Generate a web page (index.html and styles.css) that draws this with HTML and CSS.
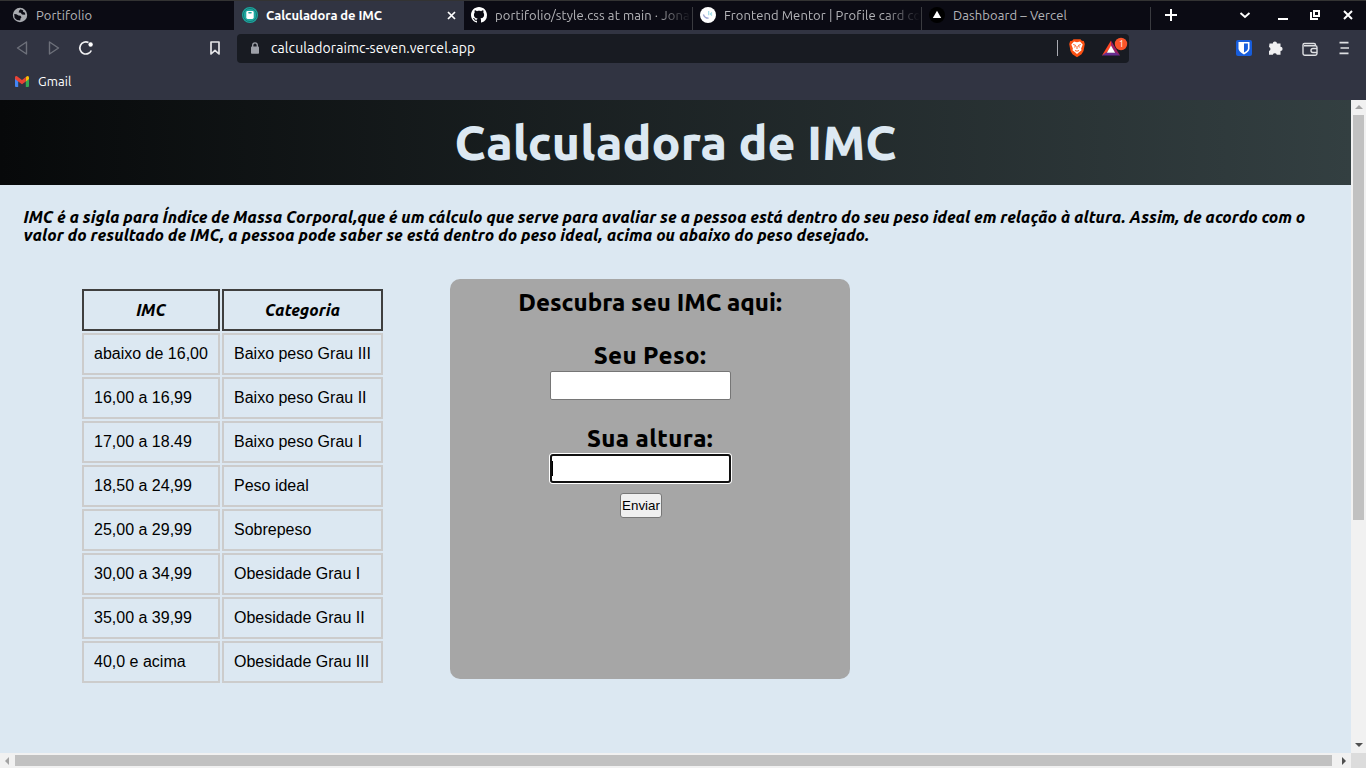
FILE: index.html
```html
<!DOCTYPE html>
<html lang="pt-BR">
<head>
<meta charset="utf-8">
<title>Calculadora de IMC</title>
<link rel="stylesheet" href="styles.css">
</head>
<body>
<div class="browser">
  <div class="tabs">
    <div class="tab tab-first">
      <svg class="favicon" width="16" height="16" viewBox="0 0 16 16"><circle cx="8" cy="8" r="7.2" fill="#a9abb0"/><path d="M2.200 7 4.500 7.300 6.500 8.500l2 .3 1 1.500-1 1.200-.3 2L5 13 2.600 11zM8.500 2.200 7 3.800l-.3 1.700 2 .3 1.300 1.700 3.200.3-.2-2-2-1 .3-1.300z" fill="#0c0c15"/></svg>
      <span class="label">Portifolio</span>
    </div>
    <div class="tab tab-active">
      <svg class="favicon" width="16" height="16" viewBox="0 0 16 16"><circle cx="8" cy="8" r="8" fill="#1da79f"/><circle cx="8" cy="8" r="6.600" fill="none" stroke="#14706f" stroke-width=".8"/><rect x="4.300" y="4" width="7.400" height="8" rx="1.400" fill="#fff"/><rect x="6.200" y="5" width="3.600" height="1.400" rx=".7" fill="#1da79f"/></svg>
      <span class="label">Calculadora de IMC</span>
      <svg class="close" width="9" height="9" viewBox="0 0 9 9"><path d="m1 1 7 7M8 1 1 8" stroke="#fff" stroke-width="1.700"/></svg>
    </div>
    <div class="tab tab-page">
      <svg class="favicon" width="16" height="16" viewBox="0 0 16 16"><path fill="#fff" d="M8 0C3.58 0 0 3.58 0 8c0 3.54 2.29 6.53 5.47 7.59.4.07.55-.17.55-.38 0-.19-.01-.82-.01-1.49-2.01.37-2.53-.49-2.69-.94-.09-.23-.48-.94-.82-1.13-.28-.15-.68-.52-.01-.53.63-.01 1.08.58 1.23.82.72 1.21 1.87.87 2.33.66.07-.52.28-.87.51-1.07-1.78-.2-3.64-.89-3.64-3.95 0-.87.31-1.59.82-2.15-.08-.2-.36-1.02.08-2.12 0 0 .67-.21 2.2.82.64-.18 1.32-.27 2-.27s1.36.09 2 .27c1.53-1.04 2.2-.82 2.2-.82.44 1.1.16 1.92.08 2.12.51.56.82 1.27.82 2.15 0 3.07-1.87 3.75-3.65 3.95.29.25.54.73.54 1.48 0 1.07-.01 1.93-.01 2.2 0 .21.15.46.55.38A8.01 8.01 0 0 0 16 8c0-4.42-3.58-8-8-8z"/></svg>
      <span class="label faded">portifolio/style.css at main · Jona</span>
    </div>
    <div class="tab tab-page">
      <svg class="favicon" width="16" height="16" viewBox="0 0 16 16"><circle cx="8" cy="8" r="8" fill="#fff"/><path d="M3.400 7.500c.8 2.400 2.600 3.800 5.200 3.700" fill="none" stroke="#9aa4d2" stroke-width="1.300"/><path d="M8.700 4v4.200M12 5.500 10.400 7 12 8.500" fill="none" stroke="#9bd9e5" stroke-width="1.100"/></svg>
      <span class="label faded">Frontend Mentor | Profile card co</span>
    </div>
    <div class="tab tab-page">
      <svg class="favicon" width="16" height="16" viewBox="0 0 16 16"><circle cx="8" cy="8" r="8" fill="#000"/><path d="m8 3.700 4.200 7.300H3.800z" fill="#fff"/></svg>
      <span class="label">Dashboard – Vercel</span>
    </div>
    <svg class="window-controls" width="215" height="29" viewBox="1151 1 215 29" fill="none" stroke="#fff"><path d="M1171 9v12M1165 15h12" stroke-width="2"/><path d="m1240.500 13 4.500 4 4.500-4" stroke-width="1.900"/><path d="M1278 19h10" stroke-width="2"/><path d="M1314 11h5v5h-5zM1311 12v7h7" stroke-width="2"/><path d="m1344 11 8 8M1352 11l-8 8" stroke-width="2"/></svg>
  </div>
  <div class="toolbar">
    <svg class="nav-icons" width="237" height="36" viewBox="0 30 237 36" fill="none"><path d="M26.500 42v12L17.500 48z" stroke="#6d707a" stroke-width="1.400" stroke-linejoin="round"/><path d="M49.500 42v12l9-6z" stroke="#6d707a" stroke-width="1.400" stroke-linejoin="round"/><path d="M91.300 50.500A6 6 0 1 1 88.500 42.600" stroke="#f0f0f2" stroke-width="1.700"/><circle cx="90.600" cy="44.500" r="2.200" fill="#fff"/><path d="M211 42h8v12l-4-3.700-4 3.700z" stroke="#e4e4e7" stroke-width="1.700" stroke-linejoin="round"/></svg>
    <div class="address">
      <svg class="lock" width="8" height="12" viewBox="0 0 8 12"><rect y="4.500" width="8" height="7.200" rx=".8" fill="#9da0a8"/><path d="M1.700 5V3.200a2.300 2.300 0 0 1 4.600 0V5" fill="none" stroke="#9da0a8" stroke-width="1.300"/></svg>
      <span class="url">calculadoraimc-seven.vercel.app</span>
      <svg class="shields" width="77" height="29" viewBox="1052 34 77 29"><path d="M1057.500 40v16" stroke="#a9abb2"/><path d="M1073.500 39.300h7l1.300 1.400 2 .2 1 3-1.300 7-2 3.300-4.500 3-4.500-3-2-3.300-1.300-7 1-3 2-.2z" fill="#fb5012"/><path d="m1074 41.500 3 .7 3-.7 2.700 3-1.600 4 .4 1.700-2.500 2-2 1.700-2-1.700-2.500-2 .4-1.700-1.600-4z" fill="#fff"/><path d="m1073.200 44.500 2.300.8-.8 2.200M1080.800 44.500l-2.300.8.800 2.200M1077 46v3M1075 50.500l2 .7 2-.7" fill="none" stroke="#fb5012" stroke-width=".9"/><path d="M1111 40.500V46l-5 8-4 1.500z" fill="#ff4724"/><path d="M1111 40.500V46l5 8 4 1.500z" fill="#9e1f63"/><path d="M1102 55.500h18l-4-3h-10z" fill="#662d91"/><path d="m1111 45.500 4.200 7.200h-8.400z" fill="#fff"/><circle cx="1121" cy="44" r="6.200" fill="#fb542b"/><text x="1119" y="47" font-family="Ubuntu, Open Sans, sans-serif" font-size="8.500" fill="#fff">1</text></svg>
    </div>
    <svg class="extensions" width="146" height="36" viewBox="1220 30 146 36" fill="none"><rect x="1236" y="40" width="16" height="16" rx="2" fill="#175ddc"/><path d="M1238.500 42h11v6.500q0 3-5.500 6-5.500-3-5.500-6z" fill="#fff"/><path d="M1244 43.500h3.900v5q0 1.900-3.900 4z" fill="#175ddc"/><path d="M1269.500 43.500h3.300a2.100 2.100 0 1 1 4.200 0h3.500v3.300a2.100 2.100 0 1 1 0 4.200v3.700h-3.700a2.100 2.100 0 0 0-4 0h-3.800v-3.800a2.100 2.100 0 0 0 0-4z" fill="#f0f0f2"/><path d="M1315.500 45.800v-.8q0-1.500-1.500-1.500h-9.500q-1.500 0-1.500 1.500v8.500q0 1.700 1.700 1.700h10.600q1.700 0 1.700-1.700v-6q0-1.700-1.700-1.700H1304M1317 48.500h-4q-2 0-2 2t2 2h4" stroke="#dedfe2" stroke-width="1.400"/><path d="M1339.500 42.700h9M1340.500 48h8.500M1339.500 53.300h9" stroke="#dedfe2" stroke-width="1.700"/></svg>
  </div>
  <div class="bookmarks">
    <svg width="14" height="11" viewBox="0 0 14 11"><path d="M0 1.500 3.200 4v7H1q-1 0-1-1z" fill="#4285f4"/><path d="M14 1.500 10.800 4v7H13q1 0 1-1z" fill="#34a853"/><path d="M10.800 1 12 .2q2-.7 2 1.500V3l-3.200 2.400z" fill="#fbbc04"/><path d="M0 3V1.700Q0-.6 2 .2L7 4l3.800-3v4.400L7 8.200 3.200 5.400z" fill="#ea4335"/></svg>
    <span class="gmail">Gmail</span>
  </div>
</div>
<div class="viewport">
  <div class="page">
    <header class="header"><h1 class="title">Calculadora de IMC</h1></header>
    <p class="intro"><span class="line-a">IMC é a sigla para Índice de Massa Corporal,que é um cálculo que serve para avaliar se a pessoa está dentro do seu peso ideal em relação à altura. Assim, de acordo com o</span><br><span class="line-b">valor do resultado de IMC, a pessoa pode saber se está dentro do peso ideal, acima ou abaixo do peso desejado.</span></p>
    <main class="content">
      <table class="table">
        <thead><tr><th>IMC</th><th>Categoria</th></tr></thead>
        <tbody>
          <tr><td>abaixo de 16,00</td><td>Baixo peso Grau III</td></tr>
          <tr><td>16,00 a 16,99</td><td>Baixo peso Grau II</td></tr>
          <tr><td>17,00 a 18.49</td><td>Baixo peso Grau I</td></tr>
          <tr><td>18,50 a 24,99</td><td>Peso ideal</td></tr>
          <tr><td>25,00 a 29,99</td><td>Sobrepeso</td></tr>
          <tr><td>30,00 a 34,99</td><td>Obesidade Grau I</td></tr>
          <tr><td>35,00 a 39,99</td><td>Obesidade Grau II</td></tr>
          <tr><td>40,0 e acima</td><td>Obesidade Grau III</td></tr>
        </tbody>
      </table>
      <form class="form">
        <h2>Descubra seu IMC aqui:</h2>
        <label>Seu Peso:</label>
        <div class="field"></div>
        <label>Sua altura:</label>
        <div class="field focused"><i class="caret"></i></div>
        <button type="button">Enviar</button>
      </form>
    </main>
  </div>
  <div class="vbar"><i class="arrow up"></i><i class="vthumb"></i><i class="arrow down"></i></div>
  <div class="hbar"><i class="arrow left"></i><i class="hthumb"></i><i class="arrow right"></i></div>
  <div class="corner"></div>
</div>
</body>
</html>
```
FILE: styles.css
```css
* { box-sizing: border-box; }
body { margin: 0; width: 1366px; height: 768px; overflow: hidden; font-family: Ubuntu, "Noto Sans", sans-serif; color: #000; }
svg { display: block; flex: none; }
.browser { height: 100px; background: #313442; }
.tabs { display: flex; height: 30px; border-top: 1px solid #333; background: #0b0b14; }
.tab { display: flex; align-items: center; height: 28px; padding-left: 7px; font-size: 13px; letter-spacing: .1px; color: #b5b5b9; white-space: nowrap; flex: none; }
.label { margin-left: 8px; line-height: 20px; }
.tab-first { width: 234px; padding-left: 12px; }
.tab-active { width: 230px; height: 29px; padding: 0 8px 1px; background: #313442; color: #fff; font-weight: 700; letter-spacing: -.1px; }
.close { margin-left: auto; }
.tab-page { width: 229px; height: 29px; padding-bottom: 1px; background: linear-gradient(#3a3b40, #3a3b40) right bottom / 1px 23px no-repeat; }
.faded { -webkit-mask-image: linear-gradient(90deg, #000 160px, transparent 196px); mask-image: linear-gradient(90deg, #000 160px, transparent 196px); }
.window-controls { margin-left: auto; }
.toolbar { display: flex; height: 36px; }
.address { display: flex; align-items: center; width: 892px; height: 29px; margin-top: 4px; padding-left: 14px; border-radius: 4px; background: #181b22; color: #fff; }
.lock { margin-bottom: 2px; }
.url { margin: 0 0 2px 12px; font-size: 14px; letter-spacing: .08px; line-height: 20px; white-space: nowrap; }
.shields { margin-left: auto; }
.extensions { margin-left: auto; }
.bookmarks { display: flex; align-items: center; height: 30px; padding-left: 15px; color: #fff; font-size: 13px; }
.gmail { margin-left: 9px; letter-spacing: .1px; }
.viewport { display: grid; grid-template: 653px 15px / 1351px 15px; }
.page { background: #dce8f2; overflow: hidden; }
.header { display: flex; justify-content: center; align-items: center; height: 85px; padding-bottom: 2px; background: linear-gradient(to right, #07090a, #333f41); }
.title { margin: 0; font-size: 48px; font-weight: 800; line-height: 60px; color: #dce8f2; white-space: nowrap; }
.intro { margin: 23px 0 0 23.500px; font-size: 16px; line-height: 18px; font-weight: 800; font-style: italic; white-space: nowrap; }
.line-a { letter-spacing: -.012px; }
.line-b { letter-spacing: .045px; }
.content { display: flex; align-items: flex-start; margin-top: 35px; }
.table { width: 305px; margin: 8px 0 0 80px; border-spacing: 2px; font: 16px "Liberation Sans", Arial, sans-serif; flex: none; }
.table th, .table td { height: 42px; padding: 0 10px; border: 2px solid #ccc; text-align: left; white-space: nowrap; }
.table th { border-color: #3f3f3f; text-align: center; font: italic 800 16px Ubuntu, "Noto Sans", sans-serif; }
.table th:first-child { width: 138px; }
.form { display: flex; flex-direction: column; align-items: center; width: 400px; height: 400px; margin-left: 65px; padding-top: 9px; border-radius: 10px; background: #a6a6a6; flex: none; }
.form h2, .form label { margin: 0; font-size: 24px; font-weight: 800; line-height: 29px; white-space: nowrap; }
.form label { margin: 24px 0 1px; letter-spacing: .4px; }
.field { width: 181px; height: 29px; margin-right: 19px; border: 1px solid #767676; border-radius: 2px; background: #fff; }
.field.focused { border: 2px solid #101010; border-radius: 3px; box-shadow: 0 0 0 1px #fff; }
.caret { display: block; width: 1px; height: 15px; margin-top: 5px; background: #000; }
.form button { width: 42px; height: 25px; margin: 10px 18px 0 0; padding: 0; border: 1px solid #767676; border-radius: 3px; background: #efefef; color: #000; font: 13.333px "Liberation Sans", Arial, sans-serif; }
.vbar, .hbar { display: flex; align-items: center; background: #f1f1f1; }
.vbar { flex-direction: column; }
.vthumb { width: 11px; height: 405px; margin-top: 6px; background: #c1c1c1; }
.hthumb { width: 1317px; height: 11px; margin-left: 6px; background: #c1c1c1; }
.arrow { width: 0; height: 0; border: 4px solid transparent; flex: none; }
.up { margin-top: 5px; border-top: 0; border-bottom-color: #a3a3a3; }
.down { margin-top: auto; margin-bottom: 6px; border-bottom: 0; border-top-color: #505050; }
.left { margin-left: 5px; border-left: 0; border-right-color: #a3a3a3; }
.right { margin-left: auto; margin-right: 5px; border-right: 0; border-left-color: #505050; }
.corner { background: #dcdcdc; }
```
